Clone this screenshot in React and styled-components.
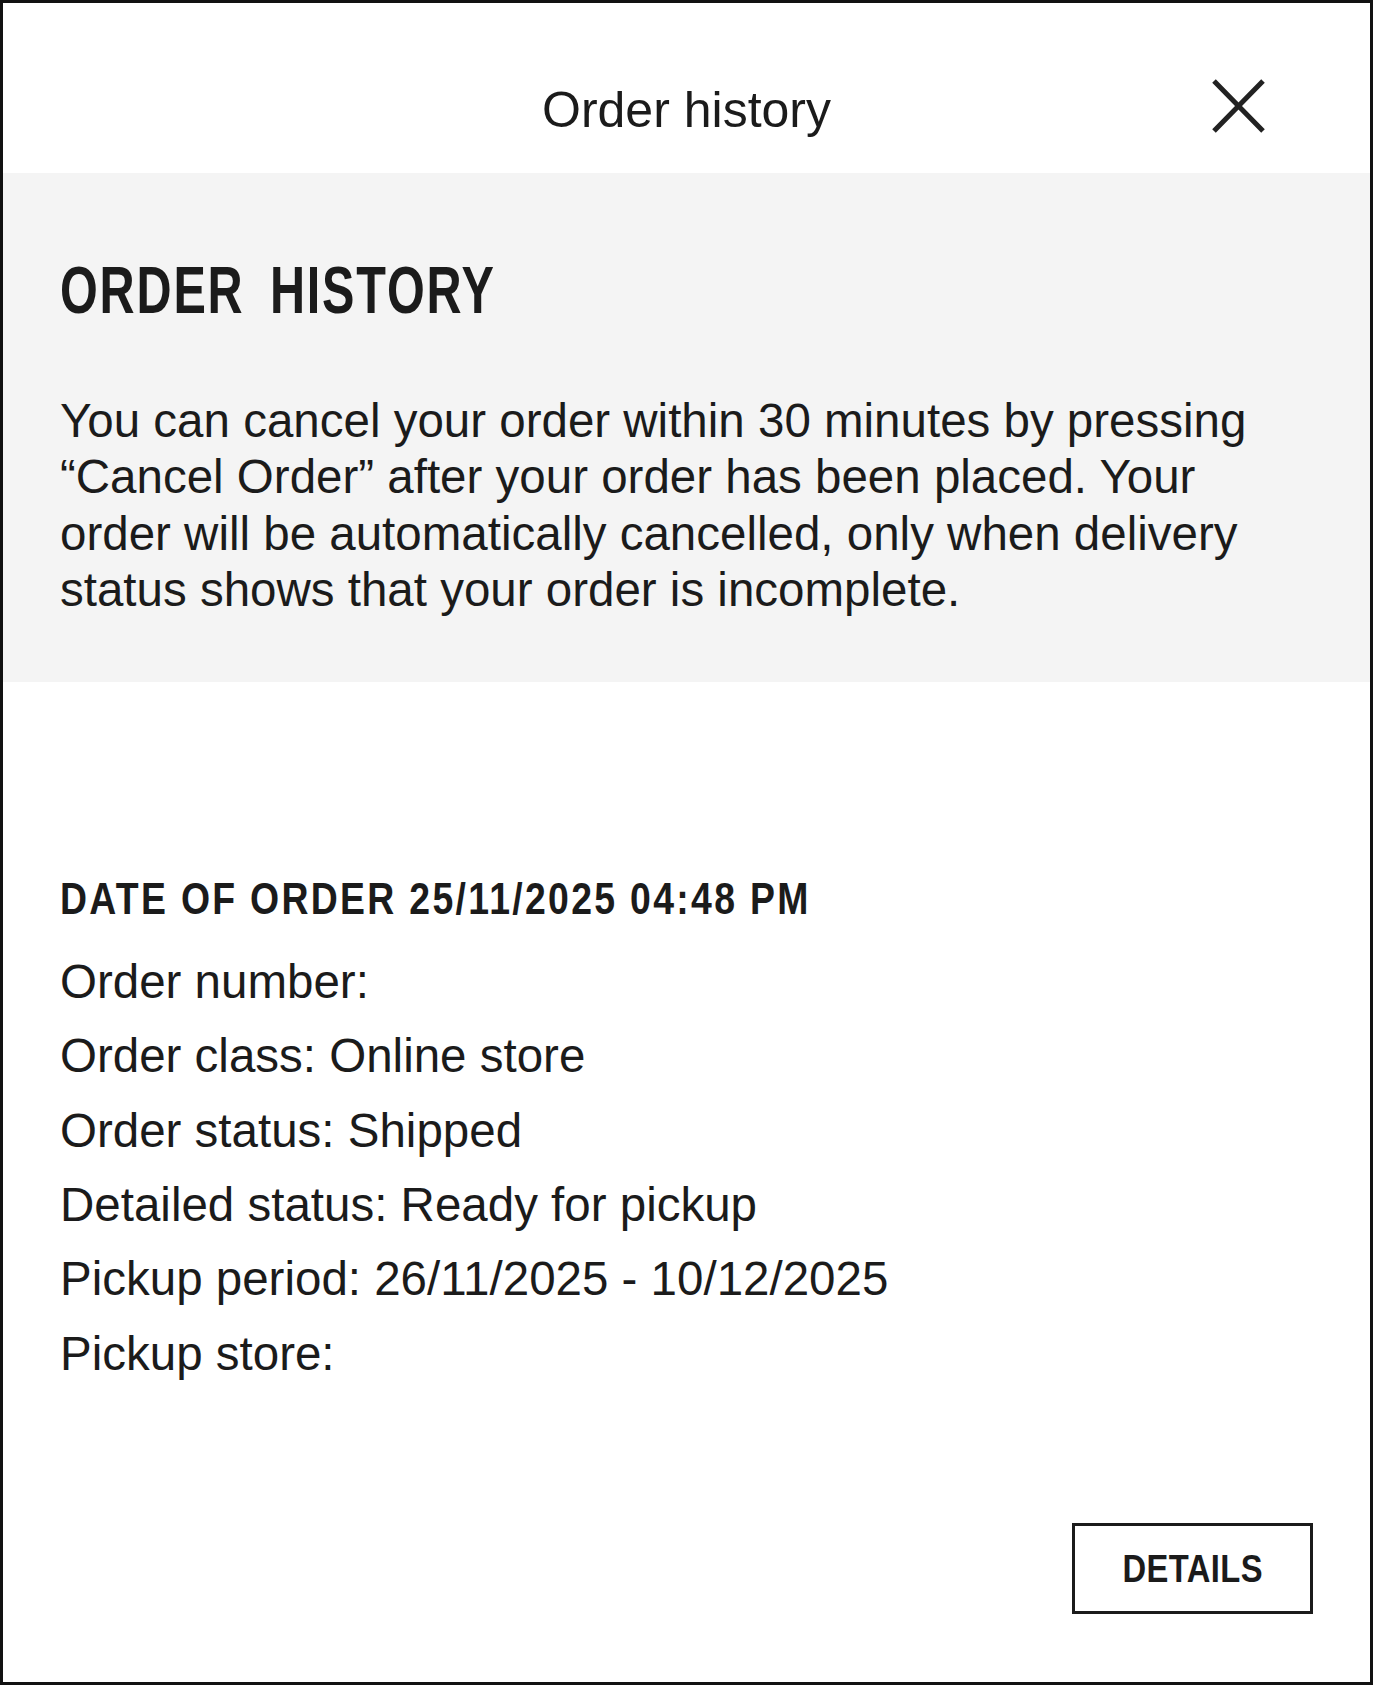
import React from "react";
import styled, { createGlobalStyle } from "styled-components";

const GlobalStyle = createGlobalStyle`
  html, body {
    margin: 0;
    padding: 0;
    background: #fff;
  }
  body {
    font-family: "Liberation Sans", Arial, sans-serif;
    color: #1b1b1b;
  }
  * {
    box-sizing: border-box;
  }
`;

// no condensed face is installed, so the bold caps get squeezed horizontally
const Squeezed = styled.span`
  display: inline-block;
  white-space: nowrap;
  transform: scaleX(${(p) => p.$scale});
  transform-origin: ${(p) => p.$origin || "left"} center;
`;

const Frame = styled.div`
  width: 1373px;
  height: 1685px;
  border: 3px solid #111;
  display: flex;
  flex-direction: column;
  background: #fff;
`;

const Header = styled.header`
  height: 170px;
  display: grid;
  grid-template-columns: 1fr auto 1fr;
  align-items: start;
  padding: 77px 104px 0;
`;

const HeaderTitle = styled.h2`
  grid-column: 2;
  margin: 0;
  font-size: 50px;
  line-height: 60px;
  font-weight: 400;
  color: #1b1b1b;
`;

const CloseButton = styled.button`
  grid-column: 3;
  justify-self: end;
  width: 55px;
  height: 56px;
  margin-top: -2px;
  padding: 0;
  border: none;
  background: none;
  cursor: pointer;
  svg {
    display: block;
  }
`;

const Intro = styled.section`
  background: #f4f4f4;
  padding: 82px 57px 64px 57px;
`;

const IntroTitle = styled.h1`
  margin: 0;
  font-size: 67.5px;
  line-height: 69px;
  font-weight: 700;
  letter-spacing: 2.5px;
  word-spacing: 14px;
  color: #1b1b1b;
`;

const IntroText = styled.p`
  margin: 69px 0 0;
  font-size: 47.5px;
  line-height: 56.3px;
`;

const OrderCard = styled.section`
  flex: 1;
  display: flex;
  flex-direction: column;
  padding: 190px 57px 68px 57px;
`;

const OrderDate = styled.h3`
  margin: 0;
  font-size: 44px;
  line-height: 54px;
  font-weight: 700;
  letter-spacing: 2.7px;
`;

const DetailList = styled.ul`
  list-style: none;
  margin: 19px 0 0;
  padding: 0;
`;

const DetailItem = styled.li`
  font-size: 47.5px;
  line-height: 74.3px;
`;

const Actions = styled.div`
  margin-top: auto;
  display: flex;
  justify-content: flex-end;
`;

const DetailsButton = styled.button`
  width: 241px;
  height: 91px;
  padding: 0;
  border: 3px solid #1b1b1b;
  background: #fff;
  font-family: "Liberation Sans", Arial, sans-serif;
  font-size: 39px;
  font-weight: 700;
  letter-spacing: 0.5px;
  color: #1b1b1b;
  cursor: pointer;
`;

const details = [
  "Order number:",
  "Order class: Online store",
  "Order status: Shipped",
  "Detailed status: Ready for pickup",
  "Pickup period: 26/11/2025 - 10/12/2025",
  "Pickup store:",
];

const CloseIcon = () => (
  <svg width="55" height="56" viewBox="0 0 55 56" fill="none">
    <path d="M3 3L52 53M52 3L3 53" stroke="#222" strokeWidth="5" />
  </svg>
);

export default function App() {
  return (
    <>
      <GlobalStyle />
      <Frame>
        <Header>
          <HeaderTitle>Order history</HeaderTitle>
          <CloseButton aria-label="Close">
            <CloseIcon />
          </CloseButton>
        </Header>
        <Intro>
          <IntroTitle>
            <Squeezed $scale={0.72}>ORDER HISTORY</Squeezed>
          </IntroTitle>
          <IntroText>
            You can cancel your order within 30 minutes by pressing “Cancel
            Order” after your order has been placed. Your order will be
            automatically cancelled, only when delivery status shows that your
            order is incomplete.
          </IntroText>
        </Intro>
        <OrderCard>
          <OrderDate>
            <Squeezed $scale={0.85}>DATE OF ORDER 25/11/2025 04:48 PM</Squeezed>
          </OrderDate>
          <DetailList>
            {details.map((line) => (
              <DetailItem key={line}>{line}</DetailItem>
            ))}
          </DetailList>
          <Actions>
            <DetailsButton>
              <Squeezed $scale={0.84} $origin="center">
                DETAILS
              </Squeezed>
            </DetailsButton>
          </Actions>
        </OrderCard>
      </Frame>
    </>
  );
}
